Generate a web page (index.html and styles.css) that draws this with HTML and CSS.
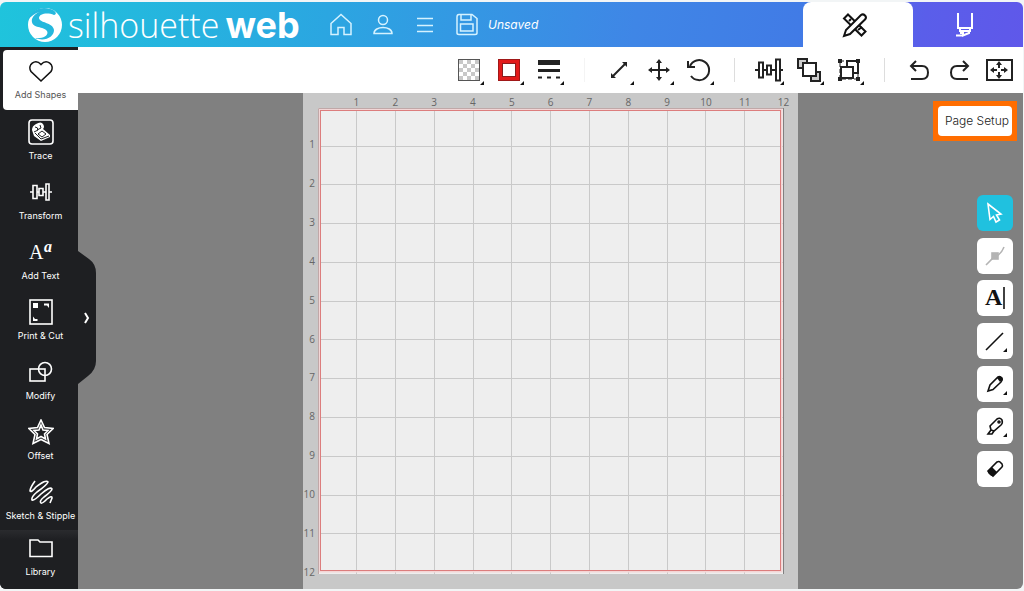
FILE: index.html
```
<!DOCTYPE html>
<html lang="en">
<head>
  <meta charset="UTF-8" />
  <meta name="viewport" content="width=device-width, initial-scale=1.0"/>
  <title>Silhouette Web</title>
  <link rel="stylesheet" href="styles.css">
</head>
<body>
<div class="app">

  <header class="header">
    <a class="logo" href="#">
      <svg width="36" height="36" viewBox="0 0 36 36">
        <circle cx="18" cy="18" r="17" fill="#fff"/>
        <path d="M1 13C4 3 14 -1 23 2C28 3 31 7 27 8C20 5 12 7 12 11C12 16 26 15 27 23C27 30 18 35 8 31C17 32 22 28 20 24C17 19 3 22 5 12C6 9 9 6 13 5C8 6 4 9 1 13Z" fill="#25b8dd"/>
      </svg>
      <span class="logo-thin">silhouette</span>
      <span class="logo-bold">web</span>
    </a>
    <nav class="header-nav">
      <button aria-label="Home"><svg width="26" height="26" viewBox="0 0 26 26"><path d="M3 11.500L13 2.500L23 11.500V22.500H16V15.500H10V22.500H3Z"/></svg></button>
      <button aria-label="Account"><svg width="26" height="26" viewBox="0 0 26 26"><circle cx="13" cy="8" r="4.500"/><path d="M4 21.500C4 13.500 22 13.500 22 21.500Z"/></svg></button>
      <button aria-label="Menu"><svg width="26" height="26" viewBox="0 0 26 26"><path d="M5 6.500H21M5 13.500H21M5 19.500H21"/></svg></button>
      <button aria-label="Save"><svg width="26" height="26" viewBox="0 0 26 26"><path d="M5 2.500H18L23 6.500V21Q23 22.500 21 22.500H5Q3 22.500 3 21V5Q3 2.500 5 2.500ZM7 2.500V8H17V2.500M6.500 12H19V19H6.500Z"/></svg></button>
      <span class="doc-name">Unsaved</span>
    </nav>
    <div class="tabs">
      <button class="tab active" aria-label="Design">
        <svg width="28" height="28" viewBox="0 0 28 28"><path d="M7 3.500L24.500 20.500L20.500 24.500L3 7.500Z"/><path d="M8 10L10 8M17 19L21 16"/><path class="tab-pen" d="M3 25L5 19L20 4Q22 2.500 24 4.500Q26 6.500 24 8.500L9 23Z"/></svg>
      </button>
      <button class="tab" aria-label="Send">
        <svg width="28" height="28" viewBox="0 0 28 28"><path d="M7 2V17H21V2M9 17V20H19V17M18 20V22L12 24.500V22H9M5 24.500H12"/></svg>
      </button>
    </div>
  </header>

  <div class="body">
    <aside class="sidebar">
      <button class="side-item active"><svg width="26" height="26" viewBox="0 0 26 26"><path d="M13 22L3 12.500C-1 6 7 -1 13 5.500C19 -1 27 6 23 12.500Z"/></svg><span>Add Shapes</span></button>
      <button class="side-item"><svg width="26" height="26" viewBox="0 0 26 26"><rect x="1" y="1" width="24" height="24" rx="3"/><path class="fill" d="M4 11Q4 7 8 5Q13 2 15 5Q17 8 15 10L22 16V18L13 22L6 17Z"/><path class="dark" d="M7 8Q10 8 10 11L6 13M12 6L13 9L9 11M10 15L14 12L18 15L14 18ZM7 14L13 20L21 17"/></svg><span>Trace</span></button>
      <button class="side-item"><svg width="26" height="26" viewBox="0 0 26 26"><path d="M2 13H5M9 13H11M15 13H18M21 13H24M5 6.500H9V19.500H5ZM11 9.500H15V16.500H11ZM18 5H21V21H18Z"/></svg><span>Transform</span></button>
      <button class="side-item"><svg width="26" height="26" viewBox="0 0 26 26"><text class="glyph-a" x="1" y="20">A</text><text class="glyph-script" x="16" y="13">a</text></svg><span>Add Text</span></button>
      <button class="side-item"><svg width="26" height="26" viewBox="0 0 26 26"><rect x="2" y="1" width="22" height="24"/><path class="fill" d="M5 4H10V9H5ZM16 4.500H21V9L19 6.500H16ZM5 17.500L7 20H9.500V22H5Z"/></svg><span>Print &amp; Cut</span></button>
      <button class="side-item"><svg width="26" height="26" viewBox="0 0 26 26"><rect x="2" y="10" width="15" height="12"/><circle cx="17" cy="10" r="6.500"/></svg><span>Modify</span></button>
      <button class="side-item"><svg width="26" height="26" viewBox="0 0 26 26"><path d="M13 1L16.500 8.500L25 9.500L19 15.500L21 24.500L13 20.500L5 24.500L7 15.500L1 9.500L9.500 8.500Z"/><path d="M13 6L15 11L20 11.500L16.500 15L17.500 20L13 17.500L8.500 20L9.500 15L6 11.500L11 11Z"/></svg><span>Offset</span></button>
      <button class="side-item"><svg width="26" height="26" viewBox="0 0 26 26"><path d="M7 2Q2 9 2 12Q3 14 8 8Q18 0 20 3Q19 6 9 13Q3 18 4 21Q6 22 13 15Q22 7 24 10Q24 12 16 18Q11 22 13 24Q14 25 19 20Q24 16 24 19L22 24"/></svg><span>Sketch &amp; Stipple</span></button>
      <button class="side-item library"><svg width="26" height="26" viewBox="0 0 26 26"><path d="M2 21.500V5H10L12 7H24V21.500Z"/></svg><span>Library</span></button>
      <button class="handle" aria-label="Expand panel">
        <svg width="18" height="134" viewBox="0 0 18 134"><path d="M0 0L11 8Q18 13 18 22V110Q18 119 10 125L0 133Z" fill="#1e1f22" stroke="none"/><path d="M7 62L10 67L7 72"/></svg>
      </button>
    </aside>

    <main class="main">
      <div class="toolbar">
        <button class="tool more" aria-label="Fill color"><svg width="28" height="28" viewBox="0 0 28 28"><defs><pattern id="checker" x="4" y="4" width="8" height="8" patternUnits="userSpaceOnUse"><path d="M0 0H4V4H0ZM4 4H8V8H4Z" fill="#c8c8c8" stroke="none"/></pattern></defs><rect class="checker-box" x="3.500" y="3.500" width="21" height="21" fill="url(#checker)"/></svg></button>
        <button class="tool more" aria-label="Line color"><svg width="28" height="28" viewBox="0 0 28 28"><rect x="3.500" y="3.500" width="21" height="21" class="red-box"/><rect x="7.500" y="7.500" width="13" height="13" class="red-hole"/></svg></button>
        <button class="tool more" aria-label="Line style"><svg width="28" height="28" viewBox="0 0 28 28"><path d="M3 6.500H25" stroke-width="5"/><path d="M3 14.500H25" stroke-width="3"/><path d="M3 21.500H25" stroke-dasharray="4 5"/></svg></button>
        <span class="sep faint"></span>
        <button class="tool more" aria-label="Scale"><svg width="28" height="28" viewBox="0 0 28 28"><path d="M7 21L21 7"/><path class="solid" d="M22 6V11L17 6ZM6 22V17L11 22Z"/></svg></button>
        <button class="tool more" aria-label="Move"><svg width="28" height="28" viewBox="0 0 28 28"><path d="M5 14H23M14 5V23"/><path class="solid" d="M14 3L17 7H11ZM14 25L17 21H11ZM3 14L7 11V17ZM25 14L21 11V17Z"/></svg></button>
        <button class="tool more" aria-label="Rotate"><svg width="28" height="28" viewBox="0 0 28 28"><path d="M5 10A10 10 0 1 1 6 20M3 5V11H10"/></svg></button>
        <span class="sep"></span>
        <button class="tool more" aria-label="Align"><svg width="30" height="28" viewBox="0 0 30 28"><path d="M1 14H5M9 14H13M17 14H22M26 14H29M5 6.500H9V21.500H5ZM13 9.500H17V18.500H13ZM22 3.500H26V24.500H22Z"/></svg></button>
        <button class="tool more" aria-label="Arrange"><svg width="28" height="28" viewBox="0 0 28 28"><path class="shade" d="M3 3H12V12H3ZM16 16H25V25H16Z"/><rect class="paper" x="8" y="7" width="13" height="13"/></svg></button>
        <button class="tool more" aria-label="Group"><svg width="28" height="28" viewBox="0 0 28 28"><path d="M5 5H23V23H5Z" stroke-width="1" stroke-dasharray="4 2"/><rect class="paper" x="12" y="5" width="11" height="12"/><rect class="paper" x="6" y="11" width="12" height="11"/><path class="solid" d="M3 3H7V7H3ZM21 3H25V7H21ZM3 21H7V25H3ZM21 21H25V25H21Z"/></svg></button>
        <span class="sep"></span>
        <button class="tool" aria-label="Undo"><svg width="28" height="28" viewBox="0 0 28 28"><path d="M6 10H17Q23 10 23 16.500Q23 23 17 23H6M11 5L6 10L11 15"/></svg></button>
        <button class="tool" aria-label="Redo"><svg width="28" height="28" viewBox="0 0 28 28"><path d="M23 10H12Q6 10 6 16.500Q6 23 12 23H23M18 5L23 10L18 15"/></svg></button>
        <button class="tool" aria-label="Fit to page"><svg width="28" height="28" viewBox="0 0 28 28"><rect x="2" y="4" width="25" height="20"/><path d="M14 7V12M14 16V21M7 14H12M16 14H21"/><path class="solid" d="M14 5L17 9H11ZM14 23L17 19H11ZM5 14L9 11V17ZM23 14L19 11V17Z"/></svg></button>
      </div>

      <section class="workspace">
        <div class="mat">
          <div class="ruler-top"><span>1</span><span>2</span><span>3</span><span>4</span><span>5</span><span>6</span><span>7</span><span>8</span><span>9</span><span>10</span><span>11</span><span>12</span></div>
          <div class="ruler-left"><span>1</span><span>2</span><span>3</span><span>4</span><span>5</span><span>6</span><span>7</span><span>8</span><span>9</span><span>10</span><span>11</span><span>12</span></div>
          <div class="page">
            <svg viewBox="0 0 466 466">
              <rect width="466" height="466" fill="#eee" stroke="none"/>
              <path d="M38.500 0V466M77.500 0V466M116.500 0V466M155.500 0V466M193.500 0V466M232.500 0V466M271.500 0V466M310.500 0V466M349.500 0V466M387.500 0V466M426.500 0V466M0 38.500H466M0 76.500H466M0 115.500H466M0 154.500H466M0 193.500H466M0 231.500H466M0 270.500H466M0 309.500H466M0 348.500H466M0 387.500H466M0 425.500H466" stroke="#c9c9c9"/>
              <rect x="1.500" y="1.500" width="462" height="462" stroke="#f3d6d6" stroke-width="2"/>
              <path d="M0.500 466V0.500H466" stroke="#c0a8a8"/>
              <path d="M465.500 0V466" stroke="#808080"/>
              <rect x="2.500" y="2.500" width="460" height="460" stroke="#dc7d7d"/>
            </svg>
          </div>
        </div>

        <button class="page-setup"><span>Page Setup</span></button>

        <div class="tools">
          <button class="active" aria-label="Select"><svg width="26" height="26" viewBox="0 0 26 26"><path d="M6 4L19 14L14.500 15L17.500 20L14 22L11.500 16.500L8 19.500Z"/></svg></button>
          <button class="muted" aria-label="Edit points"><svg width="26" height="26" viewBox="0 0 26 26"><path d="M4 22L11 15Q19 12 22 4"/><rect x="10" y="10" width="6" height="6" fill="#b4b4b4"/></svg></button>
          <button aria-label="Text"><svg width="26" height="26" viewBox="0 0 26 26"><text class="glyph-text" x="3" y="20">A</text><path d="M22 2V24"/></svg></button>
          <button class="more" aria-label="Line"><svg width="26" height="26" viewBox="0 0 26 26"><path d="M4 22L21 5"/></svg></button>
          <button class="more" aria-label="Draw"><svg width="26" height="26" viewBox="0 0 26 26"><path d="M6 20L8 14L16 6Q18 5 20 7Q21 9 19 11L11 18.500Z"/><path class="solid" d="M15 7L18 5L21 8L18 11Z"/></svg></button>
          <button class="more" aria-label="Marker"><svg width="26" height="26" viewBox="0 0 26 26"><path d="M8 13L15 6Q18 4 20 7Q21 10 19 12L12 18L9 17ZM8 13L9 17L6 21H10L12 18"/><circle cx="17" cy="9" r="1"/></svg></button>
          <button aria-label="Eraser"><svg width="26" height="26" viewBox="0 0 26 26"><path d="M6 15L15 6Q17 5 18 6L20 8Q21 10 20 11L11 20Z"/><path class="solid" d="M10 11L15 16L12 19Q10 21 8 19L6 17Q5 15 7 14Z"/></svg></button>
        </div>
      </section>
    </main>
  </div>

</div>
</body>
</html>
```
FILE: styles.css
```
* {
  margin: 0;
  padding: 0;
  box-sizing: border-box;
}

body {
  font-family: Inter, "Liberation Sans", sans-serif;
  background: #f2f5f6;
}

button {
  border: none;
  background: none;
  font-family: inherit;
  color: inherit;
  cursor: pointer;
}

svg {
  display: block;
  fill: none;
  stroke: currentColor;
  stroke-width: 2;
}

.app {
  display: flex;
  flex-direction: column;
  min-height: calc(100vh - 4px);
  margin: 2px 1px 2px 0;
  border-radius: 6px;
  overflow: hidden;
}

/* Header */
.header {
  display: flex;
  height: 45px;
  background: linear-gradient(100deg, #1fc4dc, #2ba6e1 32%, #3f86e6 62%, #417be6 78%, #5a5eea 90%, #5f58ea);
  color: #fff;
}

.logo {
  display: flex;
  align-items: center;
  width: 320px;
  padding-left: 27px;
  color: #fff;
  text-decoration: none;
}

.logo svg {
  stroke: none;
}

.logo-thin {
  margin-left: 5px;
  font-family: "Open Sans", sans-serif;
  font-size: 34px;
  font-weight: 300;
  line-height: 44px;
}

.logo-bold {
  margin-left: 6px;
  font-size: 36px;
  font-weight: 700;
  line-height: 44px;
}

.header-nav {
  display: flex;
  align-items: center;
}

.header-nav button {
  display: flex;
  justify-content: center;
  width: 42px;
}

.header-nav svg {
  stroke: #d5f2ff;
  stroke-width: 1.5;
}

.doc-name {
  font-size: 12px;
  font-style: italic;
}

.tabs {
  display: flex;
  margin-left: auto;
}

.tab {
  display: flex;
  align-items: center;
  justify-content: center;
  width: 110px;
  padding-right: 7px;
}

.tab.active {
  background: #fff;
  color: #111;
  border-radius: 8px 8px 0 0;
}

.tab-pen {
  fill: #fff;
}

/* Sidebar */
.body {
  display: flex;
  flex: 1;
}

.sidebar {
  position: relative;
  z-index: 1;
  display: flex;
  flex-direction: column;
  width: 78px;
  padding-top: 3px;
  background: #1e1f22;
  color: #fff;
}

.side-item {
  display: flex;
  flex-direction: column;
  align-items: center;
  gap: 3px;
  height: 60px;
  padding-top: 9px;
  padding-left: 3px;
  font-size: 9px;
  line-height: 16px;
  white-space: nowrap;
}

.side-item.active {
  gap: 2px;
  margin-left: 3px;
  padding-left: 0;
  background: #fff;
  color: #111;
  border-radius: 4px 0 0 4px;
}

.side-item.active span {
  color: #555;
}

.side-item svg {
  stroke-width: 1.6;
}

.side-item .fill {
  fill: currentColor;
  stroke: none;
}

.side-item .dark {
  stroke: #1e1f22;
  stroke-width: 1;
}

.side-item.library {
  flex: 1;
  padding-top: 5px;
  background: linear-gradient(#2a2b2e, #1e1f22 10px);
}

.glyph-a,
.glyph-script,
.glyph-text {
  fill: currentColor;
  stroke: none;
  font-family: "Liberation Serif", serif;
  font-size: 20px;
}

.glyph-script {
  font-size: 16px;
  font-style: italic;
  font-weight: 700;
}

.glyph-text {
  font-size: 24px;
  font-weight: 700;
}

.handle {
  position: absolute;
  left: 100%;
  top: 204px;
}

/* Toolbar */
.main {
  display: flex;
  flex-direction: column;
  flex: 1;
}

.toolbar {
  display: flex;
  align-items: center;
  justify-content: flex-end;
  height: 46px;
  padding-right: 4px;
  background: #fff;
  color: #222;
}

.tool {
  position: relative;
  display: flex;
  justify-content: center;
  width: 40px;
}

.more::after {
  content: "";
  position: absolute;
  right: 5px;
  bottom: -1px;
  border: 2px solid transparent;
  border-right-color: #111;
  border-bottom-color: #111;
}

.sep {
  width: 1px;
  height: 24px;
  margin: 0 14px 0 15px;
  background: #ddd;
}

.sep.faint {
  background: #f4f4f4;
}

.solid {
  fill: currentColor;
  stroke: none;
}

.paper {
  fill: #fff;
}

.shade {
  fill: #ccc;
}

.checker-box {
  stroke: #555;
  stroke-width: 1;
}

.red-box {
  fill: #e21b1b;
  stroke: #a01818;
  stroke-width: 1;
}

.red-hole {
  fill: #fff;
  stroke: #8c1c1c;
  stroke-width: 1;
}

/* Workspace */
.workspace {
  position: relative;
  display: flex;
  justify-content: center;
  flex: 1;
  background: #808080;
}

.mat {
  display: grid;
  grid-template-columns: 15px 466px;
  grid-template-rows: 15px 466px;
  padding-right: 14px;
  background: #c8c8c8;
  color: #666;
  font-family: "Open Sans", sans-serif;
  font-size: 10px;
}

/* labels are centred on the grid lines, half a cell after the page edge */
.ruler-top {
  grid-column: 2;
  display: grid;
  grid-template-columns: repeat(12, 1fr);
  margin: 0 -19px 0 19px;
  line-height: 19px;
  text-align: center;
}

.ruler-left {
  grid-row: 2;
  display: grid;
  grid-template-rows: repeat(12, 1fr);
  align-items: center;
  margin: 17px 0 -17px;
  padding-right: 3px;
  text-align: right;
}

.ruler-left span {
  justify-self: end;
}

.page svg {
  stroke-width: 1;
}

.page-setup {
  position: absolute;
  top: 8px;
  right: 6px;
  display: flex;
  width: 84px;
  height: 40px;
  padding: 5px;
  background: #ff6d00;
  color: #222;
  font-size: 12px;
  line-height: 29px;
  text-align: right;
  white-space: nowrap;
}

.page-setup span {
  flex: 1;
  padding-right: 3px;
  background: #fff;
  border-radius: 4px;
  font-weight: 300;
}

.tools {
  position: absolute;
  top: 102px;
  right: 10px;
  display: flex;
  flex-direction: column;
  justify-content: space-between;
  height: 292px;
}

.tools button {
  position: relative;
  display: flex;
  align-items: center;
  justify-content: center;
  width: 36px;
  height: 36px;
  background: #fff;
  border-radius: 6px;
  color: #111;
}

.tools svg {
  stroke-width: 1.6;
}

.tools .more::after {
  right: 6px;
  bottom: 7px;
}

.tools .active {
  background: #20c1df;
  color: #fff;
}

.tools .muted {
  color: #b4b4b4;
}
```
